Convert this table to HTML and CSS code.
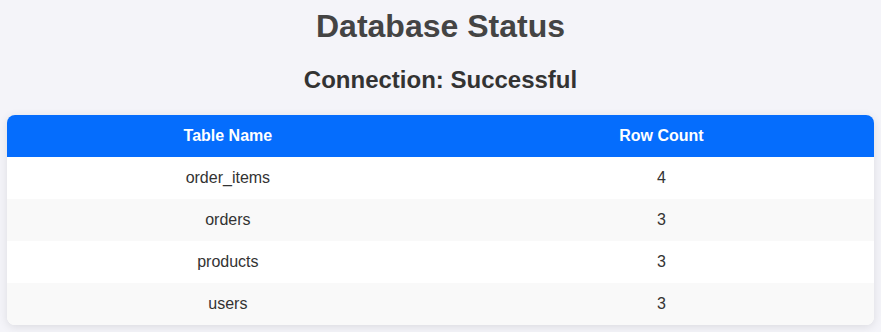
FILE: index.html
```html
<!DOCTYPE html>
<html lang="en">
<head>
<meta charset="utf-8">
<title>Database Status</title>
<link rel="stylesheet" href="styles.css">
</head>
<body>
<h1 class="title">Database Status</h1>
<h2 class="subtitle">Connection: Successful</h2>
<table class="status-table">
  <thead>
    <tr><th>Table Name</th><th>Row Count</th></tr>
  </thead>
  <tbody>
    <tr><td>order_items</td><td>4</td></tr>
    <tr><td>orders</td><td>3</td></tr>
    <tr><td>products</td><td>3</td></tr>
    <tr><td>users</td><td>3</td></tr>
  </tbody>
</table>
</body>
</html>
```
FILE: styles.css
```css
html, body {
  margin: 0;
  background: #f4f4f9;
}
body {
  padding: 8px 7px;
  font-family: "Liberation Sans", Arial, sans-serif;
  color: #333;
}
.title {
  margin: 0 0 21px;
  text-align: center;
  font-size: 32px;
  color: #444;
}
.subtitle {
  margin: 0 0 21px;
  text-align: center;
  font-size: 24px;
  color: #333;
}
.status-table {
  width: 100%;
  border-collapse: collapse;
  background: #fff;
  border-radius: 8px;
  overflow: hidden;
  box-shadow: 0 2px 10px rgba(0, 0, 0, 0.1);
}
.status-table th,
.status-table td {
  height: 42px;
  padding: 0 12px;
  text-align: center;
  font-size: 16px;
  box-sizing: border-box;
}
.status-table th {
  background: #056dfd;
  color: #fff;
  font-weight: bold;
}
.status-table td {
  color: #333;
}
.status-table tbody tr:nth-child(even) {
  background: #f9f9f9;
}
```
